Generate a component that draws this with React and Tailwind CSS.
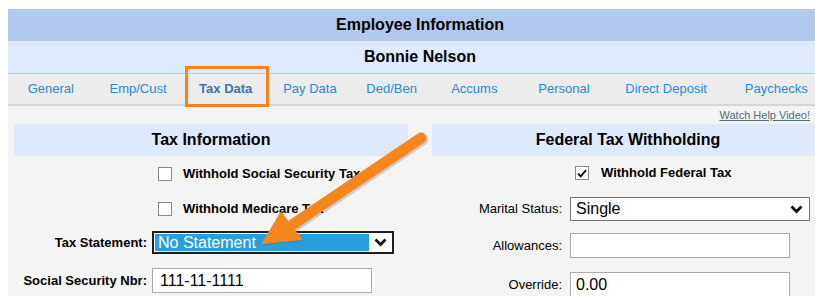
import React from "react";

const Chevron = () => (
  <svg width="13" height="9" viewBox="0 0 13 9" className="shrink-0">
    <path d="M1.5 1.5 L6.5 6.5 L11.5 1.5" fill="none" stroke="#111" strokeWidth="2.8" />
  </svg>
);

const Box = ({ checked }) => (
  <div className="w-[14px] h-[14px] border border-[#8a8a8a] bg-white flex items-center justify-center shrink-0">
    {checked && (
      <svg width="10" height="9" viewBox="0 0 10 9">
        <path d="M1 4.5 L3.8 7.3 L9 1.2" fill="none" stroke="#111" strokeWidth="1.8" />
      </svg>
    )}
  </div>
);

const tabs = [
  ["General", 86],
  ["Emp/Cust", 89],
  ["Tax Data", 87],
  ["Pay Data", 82],
  ["Ded/Ben", 82],
  ["Accums", 84],
  ["Personal", 96],
  ["Direct Deposit", 109],
  ["Paychecks", 112],
];

export default function App() {
  return (
    <div
      className="relative w-[815px] h-[296px] overflow-hidden bg-white"
      style={{ fontFamily: '"Liberation Sans", Arial, sans-serif' }}
    >
      <div className="absolute left-[8px] top-[9px] w-[824px]">
        <div className="h-[32px] bg-[#b1c9ee] flex items-center justify-center text-[16px] font-bold text-black">
          Employee Information
        </div>
        <div className="h-[33px] bg-[#dfebfc] border-b border-[#b5cbee] flex items-center justify-center text-[16px] font-bold text-black">
          Bonnie Nelson
        </div>
        <div className="h-[32px] bg-[#ececec] border-b-2 border-[#d6d6d6] flex items-center">
          {tabs.map(([t, w]) => (
            <div
              key={t}
              style={{ width: w }}
              className={
                "text-center text-[13px] " +
                (t === "Tax Data" ? "font-bold text-[#3478b4]" : "text-[#2a8ad4]")
              }
            >
              {t}
            </div>
          ))}
        </div>
        <div className="bg-[#f4f4f4] h-[200px]">
          <div className="h-[18px] pr-[22px] flex items-center justify-end">
            <span className="text-[11px] text-[#4f6f78] underline">Watch Help Video!</span>
          </div>
          <div className="flex pl-[6px] gap-[24px]">
            <div className="w-[394px]">
              <div className="h-[32px] bg-[#deeafc] flex items-center justify-center text-[16px] font-bold text-black">
                Tax Information
              </div>
              <div className="mt-[11px] h-[14px] flex items-center pl-[144px]">
                <Box />
                <span className="ml-[11px] text-[13px] font-bold text-black">Withhold Social Security Tax</span>
              </div>
              <div className="mt-[21px] h-[14px] flex items-center pl-[144px]">
                <Box />
                <span className="ml-[11px] text-[13px] font-bold text-black">Withhold Medicare Tax</span>
              </div>
              <div className="mt-[15px] flex items-center">
                <div className="w-[133px] text-right text-[13px] font-bold text-black">Tax Statement:</div>
                <div className="ml-[5px] w-[242px] h-[23px] border-2 border-[#1e1e1e] bg-white flex items-center p-[1px]">
                  <div className="flex-1 h-full bg-[#279fd9] text-white text-[16px] flex items-center pl-[3px]">
                    No Statement
                  </div>
                  <div className="w-[22px] flex items-center justify-center">
                    <Chevron />
                  </div>
                </div>
              </div>
              <div className="mt-[14px] flex items-center">
                <div className="w-[133px] text-right text-[13px] font-bold text-black">Social Security Nbr:</div>
                <div className="ml-[5px] w-[220px] h-[25px] border border-[#a9a9a9] bg-white flex items-center pl-[7px] text-[16px] text-black">
                  111-11-1111
                </div>
              </div>
            </div>
            <div className="w-[392px]">
              <div className="h-[32px] bg-[#deeafc] flex items-center justify-center text-[16px] font-bold text-black">
                Federal Tax Withholding
              </div>
              <div className="mt-[10px] h-[14px] flex items-center pl-[143px]">
                <Box checked />
                <span className="ml-[12px] text-[13px] font-bold text-black">Withhold Federal Tax</span>
              </div>
              <div className="mt-[17px] flex items-center">
                <div className="w-[130px] text-right text-[13px] text-black">Marital Status:</div>
                <div className="ml-[8px] w-[240px] h-[24px] border border-[#767676] bg-white flex items-center pl-[5px] pr-[6px] text-[16px] text-black">
                  <span className="flex-1">Single</span>
                  <Chevron />
                </div>
              </div>
              <div className="mt-[12px] flex items-center">
                <div className="w-[130px] text-right text-[13px] text-black">Allowances:</div>
                <div className="ml-[8px] w-[220px] h-[25px] border border-[#a9a9a9] bg-white" />
              </div>
              <div className="mt-[14px] flex items-center">
                <div className="w-[130px] text-right text-[13px] text-black">Override:</div>
                <div className="ml-[8px] w-[220px] h-[25px] border border-[#a9a9a9] bg-white flex items-center pl-[5px] text-[16px] text-black">
                  0.00
                </div>
              </div>
            </div>
          </div>
        </div>
      </div>
      <div className="absolute left-[185px] top-[66px] w-[84px] h-[41px] border-[3px] border-[#f5841f]" />
      <svg className="absolute left-0 top-0" width="815" height="296" viewBox="0 0 815 296">
        <g opacity="0.25" transform="translate(1.5,2)">
          <line x1="421" y1="138" x2="292" y2="225" stroke="#555" strokeWidth="11" strokeLinecap="round" />
          <polygon points="263,243 281,213 301,239" fill="#555" />
        </g>
        <line x1="421" y1="138" x2="292" y2="225" stroke="#f7861c" strokeWidth="11" strokeLinecap="round" />
        <polygon points="263,243 281,213 301,239" fill="#f7861c" strokeLinejoin="round" stroke="#f7861c" strokeWidth="2" />
      </svg>
    </div>
  );
}
